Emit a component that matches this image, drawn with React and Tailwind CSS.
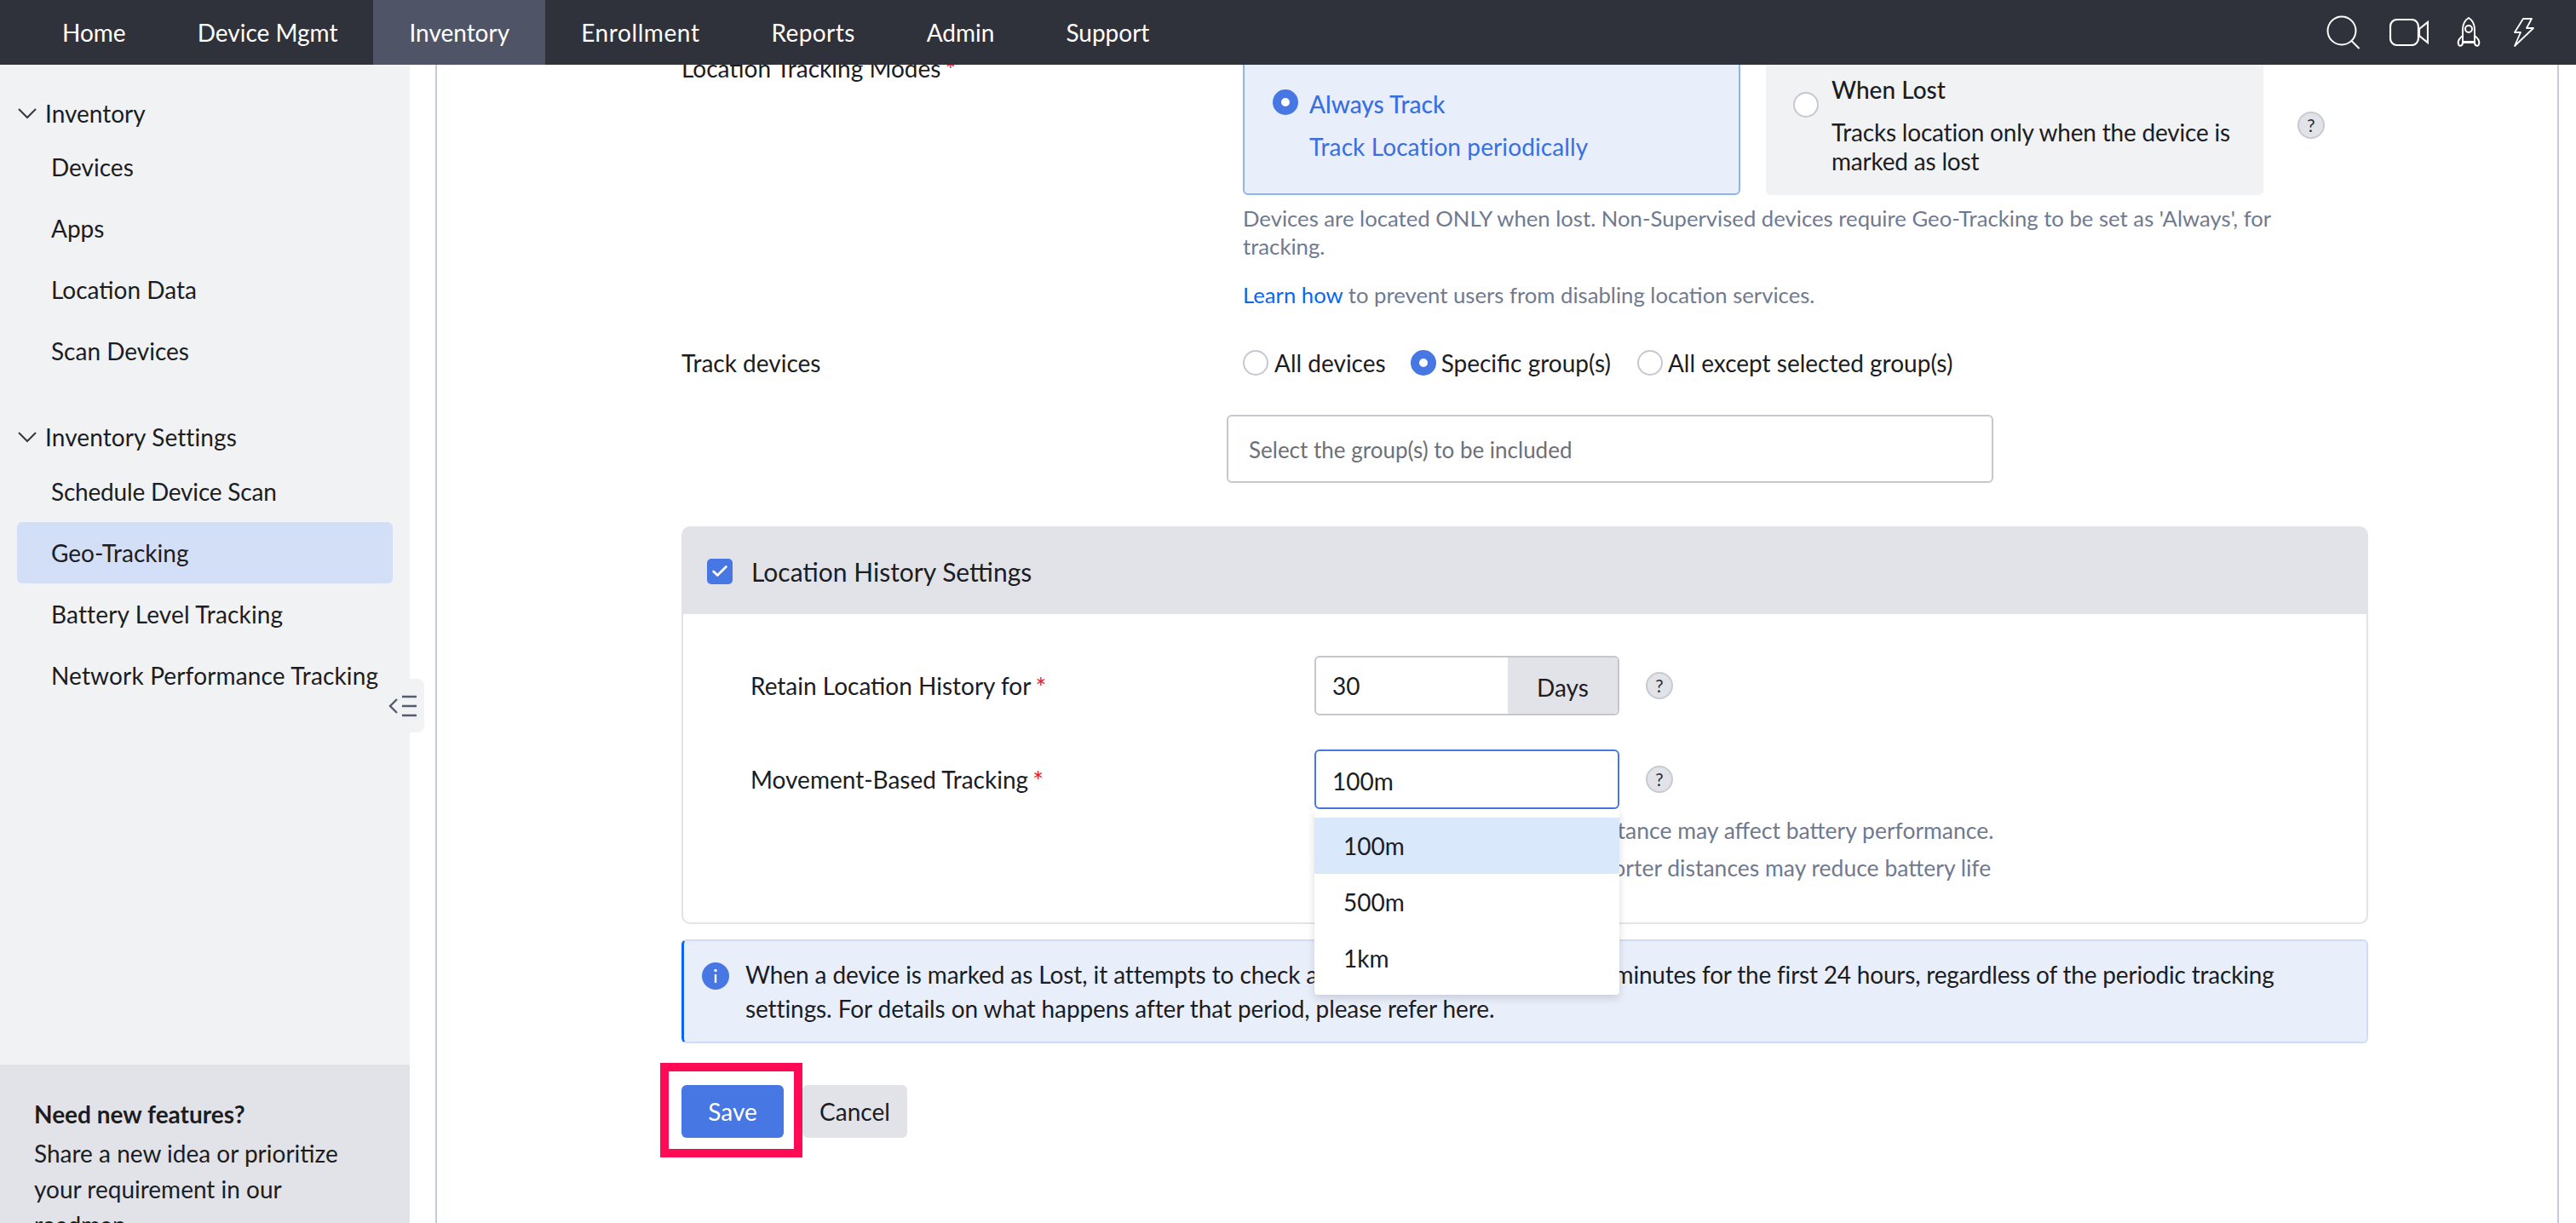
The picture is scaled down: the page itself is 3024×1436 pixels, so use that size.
import { Check } from 'lucide-react'

const NAV = [
  { label: 'Home', cls: '' },
  { label: 'Device Mgmt', cls: '' },
  { label: 'Inventory', cls: 'bg-[#4f5566]' },
  { label: 'Enrollment', cls: 'tracking-[0.6px]' },
  { label: 'Reports', cls: 'tracking-[0.4px]' },
  { label: 'Admin', cls: '' },
  { label: 'Support', cls: '' },
]

const SIDE_SETTINGS = [
  { label: 'Schedule Device Scan', cls: 'tracking-[-0.2px]' },
  { label: 'Geo-Tracking', cls: 'bg-[#d3dff7]' },
  { label: 'Battery Level Tracking', cls: 'tracking-[0.15px]' },
  { label: 'Network Performance Tracking', cls: 'tracking-[0.15px]' },
]

const Radio = ({ on }) => (
  <span className={`block w-[30px] h-[30px] shrink-0 rounded-full ${on ? 'border-[10px] border-[#4677e2] bg-white' : 'border-2 border-[#c5c7d2] bg-white'}`} />
)

const Help = ({ className = '' }) => (
  <span className={`flex w-[32px] h-[32px] shrink-0 items-center justify-center rounded-full border-2 border-[#c8cad2] bg-[#e2e3e8] text-[21px] text-[#2a2c33] ${className}`}>?</span>
)

const Req = () => <span className="relative top-[2px] text-[#f01818] ml-[5px] text-[30px] leading-none">*</span>

const Chevron = () => (
  <svg width="22" height="13" viewBox="0 0 22 13" fill="none" stroke="#33363f" strokeWidth="2"><path d="M1 1l10 10L21 1" /></svg>
)

const SideItem = ({ label, cls = '' }) => (
  <div className={`flex items-center h-[72px] mx-[20px] pl-[40px] rounded-[6px] ${cls}`}>{label}</div>
)

export default function App() {
  return (
    <div className="flex flex-col w-[3024px] h-[1436px] overflow-hidden bg-white font-['Lato',sans-serif] text-[28px] leading-[40px] text-[#1b1d23]">
      {/* top bar */}
      <header className="relative z-20 flex items-stretch justify-between h-[76px] shrink-0 bg-[#2f323b] text-white pl-[31px]">
        <nav className="flex">
          {NAV.map(n => (
            <div key={n.label} className={`flex items-center px-[42px] ${n.cls}`}>{n.label}</div>
          ))}
        </nav>
        <div className="flex items-center pr-[49px]">
          <svg width="40" height="40" viewBox="0 0 40 40" fill="none" stroke="white" strokeWidth="2" className="mr-[34px]">
            <circle cx="18" cy="18" r="16.5" /><path d="M29.5 30l9 9" />
          </svg>
          <svg width="46" height="32" viewBox="0 0 46 32" fill="none" stroke="white" strokeWidth="2.2" className="mr-[33px]">
            <rect x="1" y="1" width="33" height="30" rx="8" /><path d="M35 12l10-8v24l-10-8z" />
          </svg>
          <svg width="28" height="36" viewBox="0 0 28 36" fill="none" stroke="white" strokeWidth="2" className="mr-[39px]">
            <path d="M14 1c5 3 7 9 7 14v14H7V15C7 10 9 4 14 1z" />
            <circle cx="14" cy="14" r="4" />
            <path d="M7 22c-4 3-6 7-5 10 1 3 5 2 5-2M21 22c4 3 6 7 5 10-1 3-5 2-5-2M7 30h14" />
          </svg>
          <svg width="24" height="34" viewBox="0 0 24 34" fill="none" stroke="white" strokeWidth="1.8">
            <path d="M11 1h10l-6 11h8L1 33l7-16H1z" strokeLinejoin="round" />
          </svg>
        </div>
      </header>

      <div className="relative flex flex-1 min-h-0">
        {/* sidebar */}
        <aside className="flex flex-col justify-between w-[481px] shrink-0 bg-[#f1f2f4]">
          <div className="pt-[21px]">
            <div className="flex items-center h-[72px] pl-[21px] gap-[10px]"><Chevron /><span>Inventory</span></div>
            <div className="-mt-[9px]">
              {['Devices', 'Apps', 'Location Data', 'Scan Devices'].map(s => <SideItem key={s} label={s} />)}
            </div>
            <div className="flex items-center h-[72px] pl-[21px] gap-[10px] mt-[29px] tracking-[0.1px]"><Chevron /><span>Inventory Settings</span></div>
            <div className="-mt-[8px]">
              {SIDE_SETTINGS.map(s => <SideItem key={s.label} label={s.label} cls={s.cls} />)}
            </div>
          </div>
          <div className="h-[186px] shrink-0 overflow-hidden bg-[#e2e3e8] px-[40px] pt-[38px] leading-[42px]">
            <p className="font-bold leading-[40px] mb-[5px]">Need new features?</p>
            <p>Share a new idea or prioritize your requirement in our roadmap</p>
          </div>
        </aside>

        {/* collapse handle */}
        <div className="absolute left-[481px] top-[721px] flex items-center justify-end w-[17px] h-[63px] rounded-r-[8px] bg-[#f1f2f4]" />
        <svg width="34" height="26" viewBox="0 0 34 26" fill="none" stroke="#555b6e" strokeWidth="2.4" className="absolute left-[456px] top-[740px]">
          <path d="M10 5L2 13l8 8M16 2h17M16 13h17M16 24h17" />
        </svg>

        {/* content */}
        <main className="flex-1 min-w-0 overflow-hidden">
          <div className="ml-[30px] w-[2493px] h-full border-x-2 border-[#c6cad4] pl-[287px] overflow-hidden">
            <div className="w-[1980px]">
              <div className="relative -mt-[27px] flex">
                <div className="w-[659px] pt-[11px]">Location Tracking Modes<Req /></div>
                <div className="flex w-[584px] h-[180px] rounded-b-[6px] border-2 border-[#8fb3f0] bg-[#e9eefb] pl-[33px] pt-[54px] gap-[13px] text-[#3a6fe0]">
                  <Radio on />
                  <div className="-mt-[3px]">
                    <p className="font-medium">Always Track</p>
                    <p className="mt-[10px] tracking-[0.1px]">Track Location periodically</p>
                  </div>
                </div>
                <div className="flex w-[584px] h-[180px] ml-[30px] rounded-b-[6px] bg-[#f1f2f4] pl-[32px] pt-[59px] gap-[15px] leading-[34px]">
                  <Radio />
                  <div className="-mt-[20px]">
                    <p className="font-medium">When Lost</p>
                    <p className="mt-[16px] w-[490px] tracking-[-0.2px]">Tracks location only when the device is marked as lost</p>
                  </div>
                </div>
                <Help className="ml-[40px] mt-[82px]" />
              </div>

              <div className="ml-[659px] w-[1230px] mt-[11px] text-[25.7px] leading-[33px] text-[#6f7a90]">
                <p>Devices are located ONLY when lost. Non-Supervised devices require Geo-Tracking to be set as 'Always', for tracking.</p>
                <p className="mt-[24px]"><span className="text-[#0a66f0]">Learn how</span> to prevent users from disabling location services.</p>
              </div>

              <div className="flex items-center h-[30px] mt-[48px]">
                <span className="w-[659px]">Track devices</span>
                <Radio /><span className="ml-[7px]">All devices</span>
                <span className="ml-[29px]"><Radio on /></span><span className="ml-[6px]">Specific group(s)</span>
                <span className="ml-[31px]"><Radio /></span><span className="ml-[6px]">All except selected group(s)</span>
              </div>

              <div className="ml-[640px] w-[900px] h-[80px] mt-[46px] flex items-center rounded-[6px] border-2 border-[#c4c7d0] pl-[24px] pt-[2px] text-[26px] text-[#6e7076]">
                Select the group(s) to be included
              </div>

              {/* location history */}
              <section className="relative z-10 mt-[51px] rounded-[10px] border-2 border-[#e2e3e8] h-[467px]">
                <div className="flex items-center h-[102px] -mt-px bg-[#e2e3e8] rounded-t-[8px] pl-[28px] pt-[1px] gap-[22px]">
                  <span className="flex items-center justify-center w-[30px] h-[30px] rounded-[5px] bg-[#4677e2]">
                    <Check size={22} color="white" strokeWidth={3} />
                  </span>
                  <span className="text-[30px]">Location History Settings</span>
                </div>
                <div className="pl-[79px] pt-[49px]">
                  <div className="flex items-center">
                    <span className="w-[662px]">Retain Location History for<Req /></span>
                    <div className="flex w-[358px] h-[70px] rounded-[6px] border-2 border-[#c4c7d0] overflow-hidden">
                      <span className="flex-1 flex items-center pl-[19px]">30</span>
                      <span className="flex items-center justify-center w-[129px] pt-[4px] bg-[#e2e3e8]">Days</span>
                    </div>
                    <Help className="ml-[31px]" />
                  </div>
                  <div className="relative flex items-center mt-[40px]">
                    <span className="w-[662px]">Movement-Based Tracking<Req /></span>
                    <div className="flex items-center w-[358px] h-[70px] rounded-[6px] border-2 border-[#4677e2] pl-[19px] pt-[4px]">100m</div>
                    <Help className="ml-[31px]" />
                    <div className="absolute left-[662px] top-[70px] w-[358px] h-[218px] pt-[10px] rounded-b-[4px] bg-white shadow-[0_4px_10px_rgba(0,0,0,0.14)] z-10">
                      {['100m', '500m', '1km'].map((o, i) => (
                        <div key={o} className={`flex items-center h-[66px] pl-[34px] ${i === 0 ? 'bg-[#d9e8fa]' : ''}`}>{o}</div>
                      ))}
                    </div>
                  </div>
                  <div className="ml-[662px] mt-[3px] text-[26.5px] leading-[44px] text-[#6f7a90] whitespace-nowrap">
                    <p>Selecting higher movement distance may affect battery performance.</p>
                    <p>Very frequent tracking over shorter distances may reduce battery life</p>
                  </div>
                </div>
              </section>

              <div className="flex mt-[18px] h-[122px] rounded-[6px] border-2 border-l-[3px] border-[#cfdcf5] border-l-[#0a66f0] bg-[#e9eefb] pl-[21px] pt-[23px] gap-[19px]">
                <svg width="32" height="32" viewBox="0 0 32 32" className="shrink-0 mt-[2px]">
                  <circle cx="16" cy="16" r="16" fill="#4677e2" />
                  <rect x="14.8" y="14" width="2.4" height="10" fill="white" />
                  <circle cx="16" cy="9.5" r="1.7" fill="white" />
                </svg>
                <p className="w-[1830px] -mt-[4px] tracking-[-0.1px]">When a device is marked as Lost, it attempts to check and update location every 15 <span className="tracking-[-0.2px]">minutes for the first 24 hours, regardless of the periodic tracking</span> settings. For details on what happens after that period, please refer here.</p>
              </div>

              <div className="relative flex mt-[49px] gap-[22px]">
                <button className="w-[120px] h-[62px] rounded-[6px] bg-[#4677e2] text-white">Save</button>
                <button className="w-[123px] h-[62px] rounded-[6px] bg-[#e2e3e8]">Cancel</button>
                {/* red annotation around Save */}
                <span className="absolute -left-[25px] -top-[26px] w-[167px] h-[111px] border-[10px] border-[#ff0a54]" />
              </div>
            </div>
          </div>
        </main>
      </div>
    </div>
  )
}
